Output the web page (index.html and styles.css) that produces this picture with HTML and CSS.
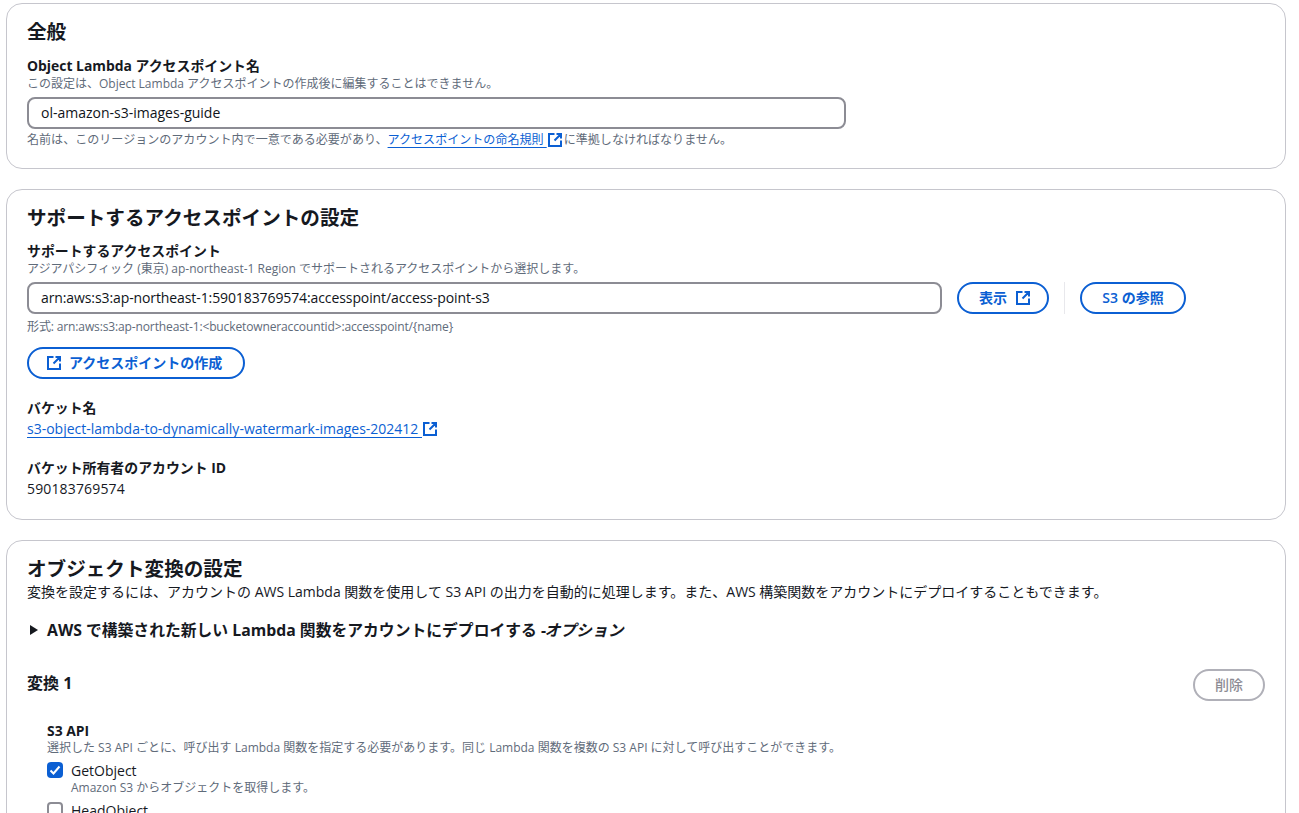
FILE: index.html
```html
<!DOCTYPE html>
<html lang="ja">
<head>
<meta charset="utf-8">
<title>Object Lambda アクセスポイントの作成</title>
<link rel="stylesheet" href="styles.css">
</head>
<body>
<svg class="defs" width="0" height="0" aria-hidden="true">
  <symbol id="ext" viewBox="0 0 16 16">
    <path d="M14 8.5V14H2V2h5.5M9.5 2H14v4.5M14 2L7.5 8.5" fill="none" stroke="currentColor" stroke-width="2"/>
  </symbol>
</svg>
<main class="page">
  <section class="card card-general">
    <h2 class="title">全般</h2>
    <div class="label">Object Lambda アクセスポイント名</div>
    <div class="desc">この設定は、Object Lambda アクセスポイントの作成後に編集することはできません。</div>
    <div class="input input-name">ol-amazon-s3-images-guide</div>
    <div class="hint">名前は、このリージョンのアカウント内で一意である必要があり、<a class="link">アクセスポイントの命名規則 </a><svg class="icon link-icon"><use href="#ext"/></svg>に準拠しなければなりません。</div>
  </section>

  <section class="card card-support">
    <h2 class="title">サポートするアクセスポイントの設定</h2>
    <div class="label">サポートするアクセスポイント</div>
    <div class="desc">アジアパシフィック (東京) ap-northeast-1 Region でサポートされるアクセスポイントから選択します。</div>
    <div class="arn-row">
      <div class="input input-arn">arn:aws:s3:ap-northeast-1:590183769574:accesspoint/access-point-s3</div>
      <button class="btn btn-view">表示<svg class="icon btn-icon-right"><use href="#ext"/></svg></button>
      <span class="divider"></span>
      <button class="btn btn-browse">S3 の参照</button>
    </div>
    <div class="hint hint-format">形式: arn:aws:s3:ap-northeast-1:&lt;bucketowneraccountid&gt;:accesspoint/{name}</div>
    <button class="btn btn-create"><svg class="icon btn-icon-left"><use href="#ext"/></svg>アクセスポイントの作成</button>
    <div class="label label-bucket">バケット名</div>
    <div class="value"><a class="link">s3-object-lambda-to-dynamically-watermark-images-202412 </a><svg class="icon link-icon"><use href="#ext"/></svg></div>
    <div class="label label-owner">バケット所有者のアカウント ID</div>
    <div class="value value-id">590183769574</div>
  </section>

  <section class="card card-transform">
    <h2 class="title title-tight">オブジェクト変換の設定</h2>
    <div class="intro">変換を設定するには、アカウントの AWS Lambda 関数を使用して S3 API の出力を自動的に処理します。また、AWS 構築関数をアカウントにデプロイすることもできます。</div>
    <div class="expander"><span class="caret"></span>AWS で構築された新しい Lambda 関数をアカウントにデプロイする -<em>オプション</em></div>
    <div class="transform-head">
      <h3 class="subtitle">変換 1</h3>
      <button class="btn btn-delete">削除</button>
    </div>
    <div class="api-block">
      <div class="label">S3 API</div>
      <div class="desc">選択した S3 API ごとに、呼び出す Lambda 関数を指定する必要があります。同じ Lambda 関数を複数の S3 API に対して呼び出すことができます。</div>
      <div class="check-row">
        <span class="checkbox checked"><svg viewBox="0 0 16 16" class="check-mark"><path d="M3.5 8.5l3 3 6-7" fill="none" stroke="#fff" stroke-width="2"/></svg></span>
        <div>
          <div class="check-label">GetObject</div>
          <div class="desc">Amazon S3 からオブジェクトを取得します。</div>
        </div>
      </div>
      <div class="check-row">
        <span class="checkbox"></span>
        <div class="check-label">HeadObject</div>
      </div>
    </div>
  </section>
</main>
</body>
</html>
```
FILE: styles.css
```css
* { box-sizing: border-box; }
html, body { margin: 0; height: 813px; overflow: hidden; background: #fff; }
body {
  font-family: "Open Sans", "Noto Sans CJK JP", sans-serif;
  font-size: 14px;
  color: #16191f;
}
.defs { position: absolute; }
.page { padding: 3px 13px 0 6px; display: flex; flex-direction: column; gap: 20px; }
.card {
  border: 1px solid #c6c6cd;
  border-radius: 16px;
  padding: 15px 20px 0;
  flex: none;
}
.card-general { height: 166px; }
.card-support { height: 331px; }
.card-transform { height: 400px; }
.title { margin: 0 0 12px; font-size: 19.6px; line-height: 26px; font-weight: 700; }
.card-support .title { margin-bottom: 11px; }
.title-tight { margin: 0 0 1px; }
.label { font-size: 13.9px; line-height: 17px; font-weight: 700; }
.desc { font-size: 12px; line-height: 17px; color: #5f6b7a; }
.card-general .desc, .card-support .desc { margin-top: 1px; }
.hint { font-size: 12.05px; line-height: 16px; color: #5f6b7a; margin-top: 3px; display: flex; align-items: center; }
.input {
  height: 32px;
  border: 2px solid #8c8c94;
  border-radius: 8px;
  padding: 0 12px;
  font-size: 14px;
  line-height: 28px;
  color: #0f141a;
}
.input-name { width: 819px; margin-top: 5px; }
.input-arn { width: 915px; letter-spacing: -0.1px; }
.arn-row { display: flex; align-items: center; margin-top: 5px; }
.link { color: #0b5fd3; text-decoration: underline; text-underline-offset: 3px; white-space: pre; }
.icon { width: 16px; height: 16px; flex: none; color: #0b5fd3; }
.link-icon { margin: 0 1px 0 0; }
.btn {
  font-family: inherit;
  height: 32px;
  border: 2px solid #0b5fd3;
  border-radius: 16px;
  background: #fff;
  color: #0b5fd3;
  font-size: 14px;
  font-weight: 600;
  display: inline-flex;
  align-items: center;
  justify-content: center;
  padding: 0 0 2px;
}
.btn .icon { margin-top: 2px; }
.btn-view { width: 92px; margin-left: 15px; justify-content: flex-start; padding-left: 20px; }
.btn-icon-right { margin-left: 8px; }
.divider { width: 1px; height: 32px; background: #e8e8ec; margin: 0 15px; }
.btn-browse { width: 106px; }
.hint.hint-format { margin-top: 5px; letter-spacing: -0.15px; }
.btn-create { width: 218px; margin-top: 12px; display: flex; justify-content: flex-start; padding-left: 17px; }
.btn-icon-left { margin-right: 7px; }
.label-bucket { margin-top: 20px; }
.label-owner { margin-top: 20px; }
.value { font-size: 14px; line-height: 20px; margin-top: 3px; display: flex; align-items: center; }
.value-id { letter-spacing: 0.15px; }
.intro { font-size: 14px; line-height: 18px; }
.expander { margin-top: 18px; font-size: 15.8px; line-height: 22px; font-weight: 700; display: flex; align-items: center; }
.expander em { font-style: normal; display: inline-block; transform: skewX(-14deg); }
.caret {
  width: 0; height: 0;
  border-left: 8px solid #16191f;
  border-top: 5px solid transparent;
  border-bottom: 5px solid transparent;
  margin: 0 9px 0 3px;
}
.transform-head { display: flex; justify-content: space-between; align-items: center; margin-top: 28px; }
.subtitle { margin: -4px 0 0; font-size: 16px; line-height: 22px; font-weight: 700; }
.btn-delete { width: 72px; border-color: #b0b0b8; color: #8c8c94; font-weight: 500; }
.api-block { margin: 21px 0 0 20px; }
.check-row { display: flex; gap: 8px; margin-top: 5px; }
.check-row .desc { margin-top: -1px; }
.check-label { font-size: 14px; line-height: 19px; }
.checkbox {
  width: 16px; height: 16px; margin-top: 1px;
  border: 2px solid #8c8c94;
  border-radius: 4px;
  flex: none;
  display: flex;
}
.checkbox.checked { background: #0b5fd3; border: 0; }
.check-mark { width: 16px; height: 16px; }
```
